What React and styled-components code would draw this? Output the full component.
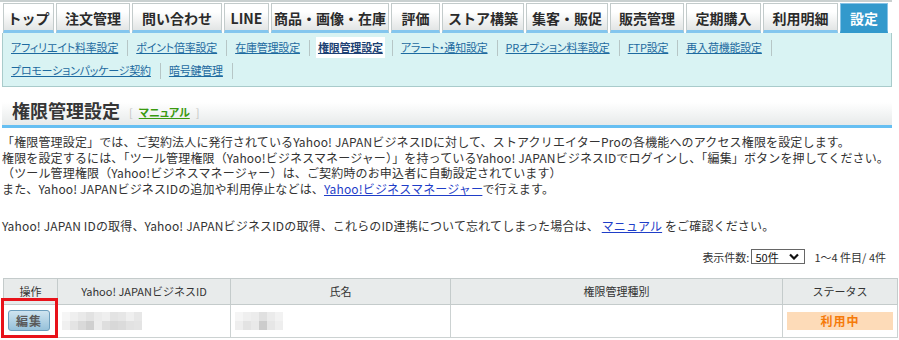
import React from 'react';
import styled, { createGlobalStyle } from 'styled-components';

const GlobalStyle = createGlobalStyle`
  body {
    margin: 0;
    background: #fff;
    color: #333;
    font-family: "Noto Sans CJK JP", "Liberation Sans", sans-serif;
    font-size: 12px;
  }
`;

const Page = styled.div`
  width: 890px;
  padding-left: 2px;
`;

const TabBar = styled.div`
  display: flex;
  gap: 2px;
  margin-left: -2px;
  padding: 1px 0 0 3px;
  border-top: 2px solid #c9d0d0;
`;

const Tab = styled.div`
  width: ${p => p.w}px;
  height: 30px;
  box-sizing: border-box;
  display: flex;
  align-items: center;
  justify-content: center;
  font-size: 14px;
  font-weight: bold;
  color: ${p => (p.active ? '#fff' : '#2b2b2b')};
  background: ${p => (p.active ? '#3399cc' : 'linear-gradient(#ffffff 30%, #e2e5e5)')};
  border: 1px solid ${p => (p.active ? '#86c2e6' : '#c3cbcb')};
  border-bottom: 3px solid ${p => (p.active ? '#3399cc' : '#84c6ee')};
  padding-top: 2px;
`;

const SubNav = styled.div`
  background: #d9f3f3;
  border: 1px solid #a9cbcb;
  border-top: none;
  padding: 3px 0 4px 6px;
  font-feature-settings: "palt";
`;

const NavRow = styled.div`
  display: flex;
  align-items: center;
  height: 23px;
`;

const NavLink = styled.a`
  font-size: 11px;
  line-height: 21px;
  padding: 0 2px;
  letter-spacing: -0.2px;
  color: ${p => (p.active ? '#1c3f73' : '#1d6aa0')};
  font-weight: ${p => (p.active ? 'bold' : 'normal')};
  background: ${p => (p.active ? '#fff' : 'transparent')};
  text-decoration: underline;
  cursor: pointer;
`;

const NavSep = styled.span`
  width: 1px;
  height: 16px;
  background: #b6c6c6;
  margin: 0 6px 0 7px;
`;

const TitleBar = styled.div`
  margin-top: 3px;
  height: 32px;
  background: linear-gradient(#ffffff 35%, #e7eaea);
  border-bottom: 3px solid #66bff2;
  display: flex;
  align-items: flex-end;
  padding: 0 0 3px 10px;
`;

const Title = styled.h1`
  margin: 0;
  font-size: 18px;
  font-weight: bold;
  color: #363636;
  line-height: 24px;
`;

const ManualBox = styled.span`
  margin-left: 9px;
  font-size: 11px;
  color: #c4c4c4;
  line-height: 20px;
  display: flex;
  gap: 6px;
  font-feature-settings: "palt";
`;

const ManualLink = styled.a`
  color: #3a9a10;
  font-weight: bold;
  text-decoration: underline;
`;

const Body = styled.div`
  margin-top: 6px;
  line-height: 15.7px;
  letter-spacing: 0.15px;
  white-space: nowrap;
`;

const Para = styled.p`
  margin: 0 0 ${p => p.gap || 0}px;
`;

const TextLink = styled.a`
  color: #1f3ec8;
  text-decoration: underline;
`;

const Pager = styled.div`
  margin-top: 15px;
  display: flex;
  justify-content: flex-end;
  align-items: center;
  font-size: 11px;
  height: 16px;
  padding-right: 6px;
`;

const Select = styled.div`
  width: 54px;
  height: 15px;
  box-sizing: border-box;
  border: 1px solid #666;
  margin: 0 9px 0 2px;
  display: flex;
  align-items: center;
  justify-content: space-between;
  padding: 0 5px 0 3px;
  font-size: 11px;
  color: #111;
`;

const TableWrap = styled.div`
  position: relative;
  margin: 13px 0 0 1px;
`;

const Table = styled.table`
  border-collapse: collapse;
  width: 889px;
  table-layout: fixed;
  font-size: 11px;
`;

const Th = styled.th`
  height: 25px;
  background: #e8ebeb;
  border: 1px solid #c4cbcb;
  font-weight: normal;
  color: #333;
  width: ${p => p.w}px;
  padding: 0;
`;

const Td = styled.td`
  height: 32px;
  border: 1px solid #ccd2d2;
  border-top: none;
  padding: 0 4px;
  text-align: ${p => p.align || 'left'};
`;

const EditButton = styled.button`
  width: 42px;
  height: 21px;
  border: 1px solid #6d9ebd;
  border-radius: 3px;
  background: linear-gradient(#cfe4ef, #96c1da);
  color: #5a5a5a;
  font-family: inherit;
  font-size: 12px;
  font-weight: bold;
  padding: 0;
  letter-spacing: 1px;
  cursor: pointer;
`;

const Badge = styled.div`
  height: 18px;
  background: #fddbb8;
  color: #f57a0a;
  font-weight: bold;
  font-size: 12px;
  display: flex;
  align-items: center;
  justify-content: center;
  letter-spacing: 1px;
`;

const Highlight = styled.div`
  position: absolute;
  left: -2px;
  top: 20px;
  width: 57px;
  height: 40px;
  box-sizing: border-box;
  border: 3px solid #e8121a;
  pointer-events: none;
`;

const Mosaic = ({ rows, size = 8, h = 9 }) => (
  <svg width={rows[0].length * size} height={rows.length * h} style={{ display: 'block' }}>
    {rows.map((r, y) =>
      r.map((c, x) => <rect key={`${x}-${y}`} x={x * size} y={y * h} width={size} height={h} fill={c} />)
    )}
  </svg>
);

const idBlur = [
  ['#f6f6f6', '#efefef', '#e9e9e9', '#e2e2e2', '#ebebeb', '#efefef', '#e3e3e3', '#e6e6e6', '#efefef', '#e7e7e7'],
  ['#f0f0f0', '#e4e4e4', '#d9d9d9', '#cfcfcf', '#ececec', '#dedede', '#d8d8d8', '#dbdbdb', '#e2e2e2', '#e4e4e4'],
];

const nameBlur = [
  ['#f5f5f5', '#efefef', '#ececec', '#e0e0e0', '#ebebeb', '#f2f2f2'],
  ['#eeeeee', '#e3e3e3', '#e9e9e9', '#cccccc', '#e6e6e6', '#eeeeee'],
];

const tabs = [
  ['トップ', 51], ['注文管理', 74], ['問い合わせ', 90], ['LINE', 45], ['商品・画像・在庫', 118],
  ['評価', 49], ['ストア構築', 82], ['集客・販促', 82], ['販売管理', 74], ['定期購入', 75],
  ['利用明細', 75], ['設定', 48],
];

const navRows = [
  ['アフィリエイト料率設定', 'ポイント倍率設定', '在庫管理設定', '権限管理設定', 'アラート・通知設定', 'PRオプション料率設定', 'FTP設定', '再入荷機能設定'],
  ['プロモーションパッケージ契約', '暗号鍵管理'],
];

const App = () => (
  <Page>
    <GlobalStyle />
    <TabBar>
      {tabs.map(([label, w]) => (
        <Tab key={label} w={w} active={label === '設定'}>{label}</Tab>
      ))}
    </TabBar>
    <SubNav>
      {navRows.map((row, i) => (
        <NavRow key={i}>
          {row.map(item => (
            <React.Fragment key={item}>
              <NavLink active={item === '権限管理設定'}>{item}</NavLink>
              <NavSep />
            </React.Fragment>
          ))}
        </NavRow>
      ))}
    </SubNav>

    <TitleBar>
      <Title>権限管理設定</Title>
      <ManualBox>[ <ManualLink>マニュアル</ManualLink> ]</ManualBox>
    </TitleBar>

    <Body>
      <Para gap={21}>
        「権限管理設定」では、ご契約法人に発行されているYahoo! JAPANビジネスIDに対して、ストアクリエイターProの各機能へのアクセス権限を設定します。<br />
        権限を設定するには、「ツール管理権限（Yahoo!ビジネスマネージャー）」を持っているYahoo! JAPANビジネスIDでログインし、「編集」ボタンを押してください。<br />
        （ツール管理権限（Yahoo!ビジネスマネージャー）は、ご契約時のお申込者に自動設定されています）<br />
        また、Yahoo! JAPANビジネスIDの追加や利用停止などは、<TextLink>Yahoo!ビジネスマネージャー</TextLink>で行えます。
      </Para>
      <Para>
        Yahoo! JAPAN IDの取得、Yahoo! JAPANビジネスIDの取得、これらのID連携について忘れてしまった場合は、 <TextLink>マニュアル</TextLink> をご確認ください。
      </Para>
    </Body>

    <Pager>
      表示件数:
      <Select>
        50件
        <svg width="10" height="7" viewBox="0 0 10 7">
          <path d="M1 1.5 L5 5.5 L9 1.5" fill="none" stroke="#111" strokeWidth="2.2" />
        </svg>
      </Select>
      1～4 件目/ 4件
    </Pager>

    <TableWrap>
      <Table>
        <thead>
          <tr>
            <Th w={53}>操作</Th>
            <Th w={172}>Yahoo! JAPANビジネスID</Th>
            <Th w={219}>氏名</Th>
            <Th w={331}>権限管理種別</Th>
            <Th w={114}>ステータス</Th>
          </tr>
        </thead>
        <tbody>
          <tr>
            <Td><EditButton>編集</EditButton></Td>
            <Td><Mosaic rows={idBlur} /></Td>
            <Td><Mosaic rows={nameBlur} /></Td>
            <Td />
            <Td><Badge>利用中</Badge></Td>
          </tr>
        </tbody>
      </Table>
      <Highlight />
    </TableWrap>
  </Page>
);

export default App;
